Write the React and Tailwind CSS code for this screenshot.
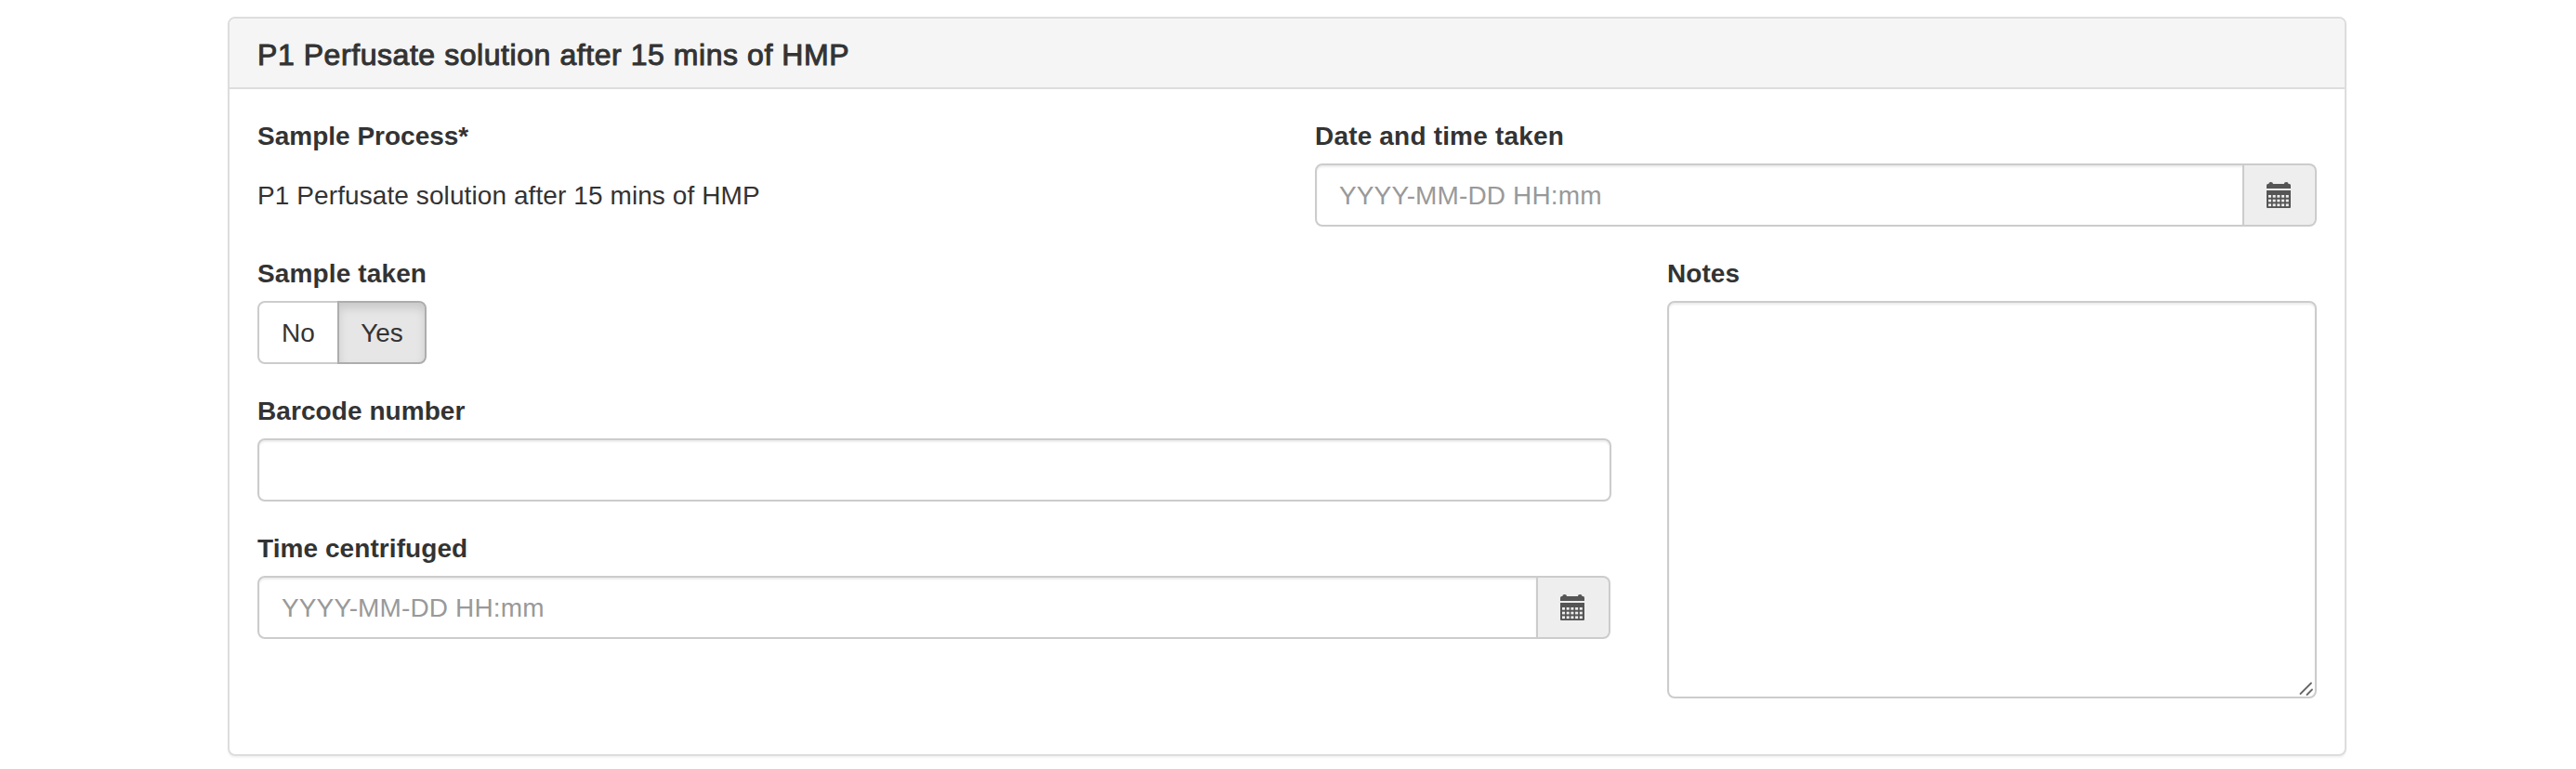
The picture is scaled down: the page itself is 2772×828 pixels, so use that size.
function CalendarIcon() {
  const columns = [2, 6.7, 11.4, 16.1, 20.8];
  const rows = [14, 18.7, 23.4];
  return (
    <svg className="mr-[2px]" width="26" height="28" viewBox="0 0 26 28" aria-hidden="true">
      <path d="M0 7V3.5Q0 2 1.5 2H2.3Q2.3 0 4.6 0T7 2H18.9Q18.9 0 21.2 0T23.6 2H24.5Q26 2 26 3.5V7Z" fill="#555" />
      <path d="M0 9H26V27Q26 28 25 28H1Q0 28 0 27Z" fill="#555" />
      {rows.map((y) => columns.map((x) => <rect key={`${x}-${y}`} x={x} y={y} width="3" height="2.7" fill="#eee" />))}
    </svg>
  );
}

function Label({ children, spacing = "tracking-[0.07px]" }) {
  return <label className={`mb-[9px] block h-[41px] pt-px text-[28px] leading-[40px] font-bold whitespace-nowrap ${spacing}`}>{children}</label>;
}

const control = "h-[68px] border-2 border-[#ccc] bg-white px-[24px] pt-[2px] text-[28px] tracking-[0.13px] text-[#555] shadow-[inset_0_2px_2px_rgba(0,0,0,0.075)] outline-none placeholder:text-[#999] placeholder:opacity-100";

function DateInput() {
  return (
    <div className="flex">
      <input className={`${control} min-w-0 flex-1 rounded-l-[8px]`} placeholder="YYYY-MM-DD HH:mm" />
      <span className="flex h-[68px] w-[78px] items-center justify-center rounded-r-[8px] border-2 border-l-0 border-[#ccc] bg-[#eee]">
        <CalendarIcon />
      </span>
    </div>
  );
}

export default function App() {
  return (
    <div className="h-[828px] overflow-hidden bg-white pt-[18px] pl-[245px] font-['Liberation_Sans',Arial,sans-serif] text-[#333]">
      <section className="h-[796px] w-[2280px] rounded-[8px] border-2 border-[#ddd] bg-white shadow-[0_2px_2px_rgba(0,0,0,0.05)]">
        <header className="h-[76px] rounded-t-[6px] border-b-2 border-[#ddd] bg-[#f5f5f5] px-[30px] pt-[22px]">
          <h3 className="text-[32px] leading-[35px] font-normal tracking-[0.56px] whitespace-nowrap [-webkit-text-stroke:1px_#333]">
            P1 Perfusate solution after 15 mins of HMP
          </h3>
        </header>
        <div className="p-[30px]">
          <div className="mb-[30px] grid grid-cols-2 gap-[60px]">
            <div>
              <Label spacing="tracking-normal">Sample Process*</Label>
              <p className="pt-[15px] text-[28px] leading-[40px] tracking-[0.09px] whitespace-nowrap">P1 Perfusate solution after 15 mins of HMP</p>
            </div>
            <div>
              <Label spacing="tracking-[0.18px]">Date and time taken</Label>
              <DateInput />
            </div>
          </div>
          <div className="flex justify-between">
            <div className="flex w-[1457px] flex-col gap-[30px]">
              <div>
                <Label spacing="tracking-[0.13px]">Sample taken</Label>
                <div className="flex text-[28px]">
                  <button className="h-[68px] w-[88px] rounded-l-[8px] border-2 border-[#ccc] bg-white pt-px">No</button>
                  <button className="-ml-[2px] h-[68px] w-[96px] rounded-r-[8px] border-2 border-[#adadad] bg-[#e6e6e6] pt-px shadow-[inset_0_6px_10px_rgba(0,0,0,0.125)]">Yes</button>
                </div>
              </div>
              <div>
                <Label>Barcode number</Label>
                <input className={`${control} block w-full rounded-[8px]`} />
              </div>
              <div className="pr-[1px]">
                <Label>Time centrifuged</Label>
                <DateInput />
              </div>
            </div>
            <div className="w-[699px]">
              <Label>Notes</Label>
              <div className="relative">
                <textarea className="block h-[428px] w-full resize-none rounded-[8px] border-2 border-[#ccc] bg-white px-[24px] py-[12px] text-[28px] shadow-[inset_0_2px_2px_rgba(0,0,0,0.075)] outline-none" />
                <svg className="absolute right-[3px] bottom-[2px]" width="16" height="16" viewBox="0 0 16 16" fill="none" stroke="#666" strokeWidth="1.8" strokeLinecap="round">
                  <path d="M1.5 13L13 1.5M8.5 14L14 8.5" />
                </svg>
              </div>
            </div>
          </div>
        </div>
      </section>
    </div>
  );
}
